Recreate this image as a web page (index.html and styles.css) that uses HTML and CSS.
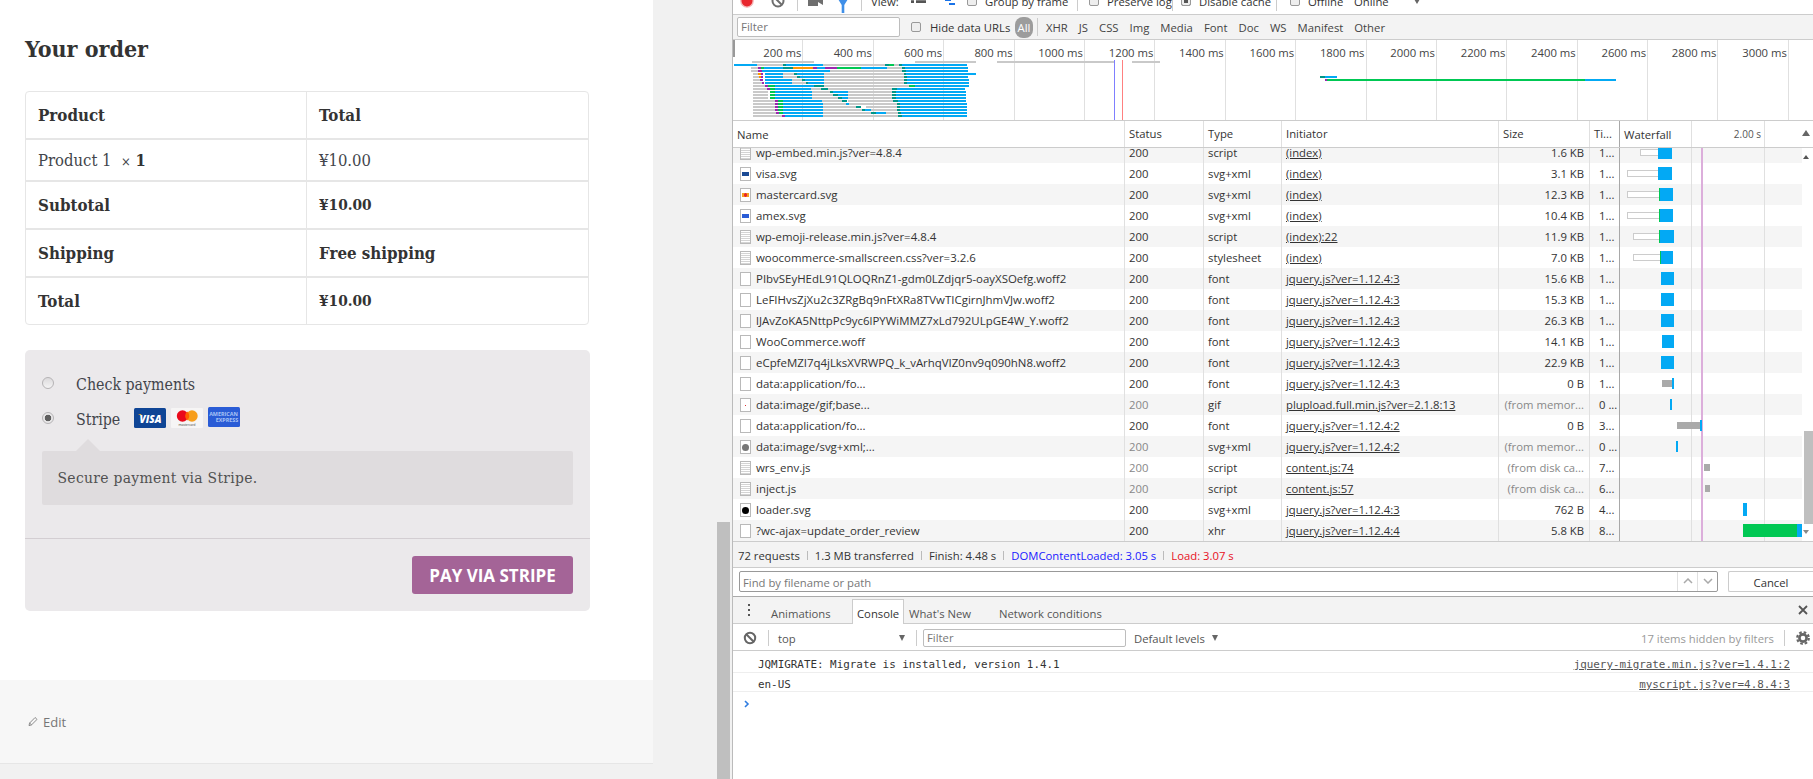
FILE: index.html
```html
<!DOCTYPE html>
<html lang="en">
<head>
  <meta charset="UTF-8" />
  <title>Checkout - Network panel</title>
  <link rel="stylesheet" href="styles.css">
</head>
<body>
<div class="screen">

  <!-- Shop page -->
  <div class="shop">
    <div class="article">
      <h3 class="order-title">Your order</h3>
      <table class="order-table">
        <tr class="row-head"><th class="col-a">Product</th><th>Total</th></tr>
        <tr class="row-item"><td class="col-a">Product 1 &nbsp;<span class="qty">×</span> <b>1</b></td><td>¥10.00</td></tr>
        <tr class="row-head"><th class="col-a">Subtotal</th><th class="amt">¥10.00</th></tr>
        <tr class="row-head"><th class="col-a">Shipping</th><th>Free shipping</th></tr>
        <tr class="row-head"><th class="col-a">Total</th><th class="amt">¥10.00</th></tr>
      </table>

      <div class="payment">
        <div class="methods">
          <label class="method"><input type="radio" name="pay" class="radio"><span class="method-name">Check payments</span></label>
          <label class="method method-stripe">
            <input type="radio" name="pay" class="radio" checked><span class="method-name">Stripe</span>
            <svg class="card" viewBox="0 0 32 20"><rect width="32" height="20" rx="1.5" fill="#0f4595"/><path d="M4 6h3l1 2z" fill="#e8a52c"/><text x="16.5" y="14.5" class="card-visa">VISA</text></svg>
            <svg class="card" viewBox="0 0 32 20"><rect width="32" height="20" rx="1" fill="#f6f5f5"/><circle cx="11.5" cy="8" r="5.7" fill="#ea0a1b"/><circle cx="21" cy="8" r="5.7" fill="#f79e1b"/><path d="M16.2 3.6a5.7 5.7 0 0 1 0 8.8a5.7 5.7 0 0 1 0-8.8z" fill="#ff5f00"/><text x="16" y="18.2" class="card-mc">mastercard</text></svg>
            <svg class="card card-amex" viewBox="0 0 32 20"><rect width="32" height="20" rx="1.5" fill="#2a5cd6"/><text x="15.5" y="8.5" class="card-ax">AMERICAN</text><text x="19" y="15" class="card-ax">EXPRESS</text></svg>
          </label>
          <div class="pay-desc">Secure payment via Stripe.</div>
        </div>
        <div class="pay-foot"><button class="pay-btn">Pay via Stripe</button></div>
      </div>
    </div>
    <div class="entry-foot">
      <svg class="pencil" viewBox="0 0 12 12"><path d="M8.5 1.2l2.3 2.3-6.6 6.6-3 .8.7-3z" fill="none" stroke="#777" stroke-width="1"/><path d="M2 7.8l2.3 2.3" stroke="#777" stroke-width="1"/></svg>
      <span>Edit</span>
    </div>
  </div>

  <div class="gutter"><div class="gutter-thumb"></div></div>

  <!-- DevTools -->
  <div class="devtools">
    <div class="net-toolbar">
      <div class="net-toolbar-inner">
        <svg class="tb-record" viewBox="0 0 16 16"><circle cx="8" cy="8" r="7" fill="#e8262d" stroke="#f3b6b6" stroke-width="1.5"/></svg>
        <svg class="tb-stop" viewBox="0 0 14 14"><circle cx="7" cy="7" r="5.5" fill="none" stroke="#6e6e6e" stroke-width="2"/><path d="M3 3l8 8" stroke="#6e6e6e" stroke-width="2"/></svg>
        <span class="tb-sep sep-a"></span>
        <svg class="tb-cam" viewBox="0 0 15 14"><path d="M0 2h10v10H0zM10 6l5-3v8l-5-3z" fill="#6e6e6e"/></svg>
        <svg class="tb-funnel" viewBox="0 0 10 14"><path d="M0 0h10L6.300 6v8H3.700V6z" fill="#3f8fe8"/></svg>
        <span class="tb-sep sep-b"></span>
        <span class="tb-view">View:</span>
        <svg class="tb-list" viewBox="0 0 15 14"><path d="M0 3h3v2H0zM5 3h10v2H5zM0 8h3v2H0zM5 8h10v2H5z" fill="#555"/></svg>
        <svg class="tb-wf" viewBox="0 0 14 14"><path d="M0 0h6v2H0zM4 4h6v2H4zM8 8h6v2H8z" fill="#1a73e8"/></svg>
        <span class="tb-check ck-a"></span><span class="tb-label lb-a">Group by frame</span>
        <span class="tb-sep sep-c"></span>
        <span class="tb-check ck-b"></span><span class="tb-label lb-b">Preserve log</span>
        <span class="tb-sep sep-d"></span>
        <span class="tb-check ck-c is-on"></span><span class="tb-label lb-b">Disable cache</span>
        <span class="tb-sep sep-e"></span>
        <span class="tb-check ck-d"></span><span class="tb-label lb-b">Offline</span>
        <span class="tb-label lb-c">Online</span>
        <span class="tb-caret"></span>
      </div>
    </div>

    <div class="net-filter">
      <div class="field field-filter">Filter</div>
      <span class="tb-check hide-check"></span><span class="hide-label">Hide data URLs</span>
      <span class="pill">All</span>
      <span class="filter-sep"></span>
      <span class="ftype">XHR</span><span class="ftype">JS</span><span class="ftype">CSS</span><span class="ftype">Img</span><span class="ftype">Media</span><span class="ftype">Font</span><span class="ftype">Doc</span><span class="ftype">WS</span><span class="ftype">Manifest</span><span class="ftype">Other</span>
    </div>

    <div class="overview">
      <div class="tick">200 ms</div><div class="tick">400 ms</div><div class="tick">600 ms</div><div class="tick">800 ms</div><div class="tick">1000 ms</div><div class="tick">1200 ms</div><div class="tick">1400 ms</div><div class="tick">1600 ms</div><div class="tick">1800 ms</div><div class="tick">2000 ms</div><div class="tick">2200 ms</div><div class="tick">2400 ms</div><div class="tick">2600 ms</div><div class="tick">2800 ms</div><div class="tick">3000 ms</div>
      <!-- coordinates here are in a 2.8x / 3x space -->
      <svg class="overview-bars" viewBox="11.2 120 3024 240" preserveAspectRatio="none" shape-rendering="crispEdges">
        <path class="g" d="M65 184h172v5H65zM522 184h170v5H522zM749 184h329v5H749zM1127 184h80v5h-80z"/>
        <path class="handle" d="M11 120h7v52h-7z"/>
        <path class="lb" d="M1079 180h3v180h-3z"/>
        <path class="lr" d="M1100 180h3v180h-3z"/>
        <path class="g" d="M78 192h72v6H78zM263 192h174v6H263zM462 192h14v6h-14zM62 201h18v6H62zM442 201h42v6h-42zM62 210h20v6H62zM283 210h201v6H283zM66 219h16v6H66zM150 219h32v6h-32zM266 219h224v6H266zM66 228h18v6H66zM152 228h38v6h-38zM266 228h224v6H266zM66 237h22v6H66zM175 237h29v6h-29zM266 237h224v6H266zM66 246h26v6H66zM175 246h41v6h-41zM266 246h224v6H266zM66 255h34v6H66zM266 255h238v6H266zM66 264h40v6H66zM230 264h28v6h-28zM276 264h179v6H276zM66 273h42v6H66zM232 273h50v6h-50zM332 273h124v6H332zM66 282h44v6H66zM232 282h60v6h-60zM332 282h124v6H332zM66 291h44v6H66zM232 291h72v6h-72zM334 291h122v6H334zM66 300h64v6H66zM260 300h56v6h-56zM334 300h124v6H334zM66 309h64v6H66zM262 309h66v6h-66zM336 309h134v6H336zM66 318h64v6H66zM262 318h94v6h-94zM384 318h86v6h-86zM66 327h64v6H66zM263 327h109v6H263zM398 327h72v6h-72zM66 336h66v6H66zM263 336h135v6H263zM440 336h34v6h-34zM66 345h82v6H66zM263 345h211v6H263z"/>
        <path class="b" d="M13 192h65v6H13zM160 192h103v6H160zM484 192h183v6H484zM98 201h52v6H98zM247 201h21v6h-21zM370 201h72v6h-72zM494 201h175v6H494zM92 210h191v6H92zM496 210h173v6H496zM100 219h50v6h-50zM190 219h76v6h-76zM496 219h196v6H496zM100 228h52v6h-52zM198 228h68v6h-68zM498 228h171v6H498zM100 237h75v6h-75zM212 237h54v6h-54zM498 237h173v6H498zM100 246h75v6h-75zM222 246h44v6h-44zM498 246h174v6H498zM128 255h110v6H128zM520 255h153v6H520zM128 264h102v6H128zM470 264h191v6H470zM128 273h104v6H128zM290 273h42v6h-42zM468 273h195v6H468zM130 282h102v6H130zM304 282h28v6h-28zM468 282h196v6H468zM130 291h102v6H130zM316 291h18v6h-18zM468 291h196v6H468zM150 300h110v6H150zM472 300h192v6H472zM150 309h112v6H150zM328 309h8v6h-8zM478 309h187v6H478zM150 318h112v6H150zM478 318h188v6H478zM150 327h113v6H150zM380 327h18v6h-18zM480 327h186v6H480zM152 336h111v6H152zM412 336h28v6h-28zM482 336h185v6H482zM158 345h105v6H158zM484 345h183v6H484zM1668 228h34v6h-34zM2397 237h87v6h-87z"/>
        <path class="t" d="M150 192h10v6h-10zM437 192h10v6h-10zM476 192h8v6h-8zM150 201h28v6h-28zM484 201h10v6h-10zM484 210h12v6h-12zM182 219h8v6h-8zM490 219h6v6h-6zM190 228h8v6h-8zM490 228h8v6h-8zM204 237h8v6h-8zM490 237h8v6h-8zM216 246h6v6h-6zM490 246h8v6h-8zM238 255h28v6h-28zM258 264h18v6h-18zM455 264h15v6h-15zM282 273h8v6h-8zM456 273h12v6h-12zM292 282h12v6h-12zM456 282h12v6h-12zM304 291h12v6h-12zM456 291h12v6h-12zM316 300h14v6h-14zM458 300h14v6h-14zM470 309h8v6h-8zM356 318h14v6h-14zM470 318h8v6h-8zM372 327h8v6h-8zM470 327h10v6h-10zM398 336h14v6h-14zM474 336h8v6h-8zM474 345h10v6h-10zM1656 228h12v6h-12z"/>
        <path class="p" d="M80 201h10v6H80zM235 201h12v6h-12zM268 201h34v6h-34zM82 210h10v6H82zM90 219h6v6h-6zM90 228h6v6h-6zM88 237h8v6h-8zM92 246h6v6h-6zM100 255h8v6h-8zM106 264h10v6h-10zM130 300h6v6h-6zM130 309h8v6h-8zM130 318h8v6h-8zM130 327h8v6h-8zM132 336h8v6h-8zM148 345h10v6h-10zM1669 237h6v6h-6z"/>
        <path class="o" d="M178 201h57v6h-57zM82 219h8v6h-8zM84 228h6v6h-6z"/>
        <path class="gr" d="M447 192h15v6h-15zM90 201h8v6h-8zM302 201h68v6h-68zM108 255h20v6h-20zM504 255h16v6h-16zM116 264h12v6h-12zM116 273h12v6h-12zM116 282h14v6h-14zM116 291h14v6h-14zM136 300h14v6h-14zM138 309h12v6h-12zM138 318h12v6h-12zM138 327h12v6h-12zM140 336h12v6h-12zM1675 237h722v6h-722z"/>
      </svg>
    </div>

    <div class="net-head net-grid">
      <div class="cell cell-name">Name</div>
      <div class="cell">Status</div>
      <div class="cell">Type</div>
      <div class="cell">Initiator</div>
      <div class="cell">Size</div>
      <div class="cell">Ti...</div>
      <div class="cell cell-wf head-wf"><span>Waterfall</span><span class="head-time">2.00 s</span></div>
      <span class="sort-arrow"></span>
      <i class="wf-line line-1"></i><i class="wf-line line-2"></i>
    </div>

    <div class="net-body">
      <div class="net-list">
        <div class="net-row net-grid row-first">
          <div class="cell cell-name"><i class="ficon f-script"></i>wp-embed.min.js?ver=4.8.4</div><div class="cell">200</div><div class="cell">script</div><div class="cell"><u>(index)</u></div><div class="cell cell-size">1.6 KB</div><div class="cell cell-time">1...</div>
          <div class="cell cell-wf"><i class="wait" style="margin-left:19px;width:18px"></i><i class="recv" style="width:14px"></i></div>
        </div>
        <div class="net-row net-grid">
          <div class="cell cell-name"><i class="ficon f-visa"></i>visa.svg</div><div class="cell">200</div><div class="cell">svg+xml</div><div class="cell"><u>(index)</u></div><div class="cell cell-size">3.1 KB</div><div class="cell cell-time">1...</div>
          <div class="cell cell-wf"><i class="wait" style="margin-left:6px;width:31px"></i><i class="recv" style="width:14px"></i></div>
        </div>
        <div class="net-row net-grid">
          <div class="cell cell-name"><i class="ficon f-mc"></i>mastercard.svg</div><div class="cell">200</div><div class="cell">svg+xml</div><div class="cell"><u>(index)</u></div><div class="cell cell-size">12.3 KB</div><div class="cell cell-time">1...</div>
          <div class="cell cell-wf"><i class="wait" style="margin-left:6px;width:32px"></i><i class="ttfb" style="width:1px"></i><i class="recv" style="width:13px"></i></div>
        </div>
        <div class="net-row net-grid">
          <div class="cell cell-name"><i class="ficon f-amex"></i>amex.svg</div><div class="cell">200</div><div class="cell">svg+xml</div><div class="cell"><u>(index)</u></div><div class="cell cell-size">10.4 KB</div><div class="cell cell-time">1...</div>
          <div class="cell cell-wf"><i class="wait" style="margin-left:6px;width:32px"></i><i class="ttfb" style="width:1px"></i><i class="recv" style="width:13px"></i></div>
        </div>
        <div class="net-row net-grid">
          <div class="cell cell-name"><i class="ficon f-script"></i>wp-emoji-release.min.js?ver=4.8.4</div><div class="cell">200</div><div class="cell">script</div><div class="cell"><u>(index):22</u></div><div class="cell cell-size">11.9 KB</div><div class="cell cell-time">1...</div>
          <div class="cell cell-wf"><i class="wait" style="margin-left:12px;width:26px"></i><i class="ttfb" style="width:1px"></i><i class="recv" style="width:14px"></i></div>
        </div>
        <div class="net-row net-grid">
          <div class="cell cell-name"><i class="ficon f-script"></i>woocommerce-smallscreen.css?ver=3.2.6</div><div class="cell">200</div><div class="cell">stylesheet</div><div class="cell"><u>(index)</u></div><div class="cell cell-size">7.0 KB</div><div class="cell cell-time">1...</div>
          <div class="cell cell-wf"><i class="wait" style="margin-left:12px;width:27px"></i><i class="ttfb" style="width:1px"></i><i class="recv" style="width:12px"></i></div>
        </div>
        <div class="net-row net-grid">
          <div class="cell cell-name"><i class="ficon"></i>PIbvSEyHEdL91QLOQRnZ1-gdm0LZdjqr5-oayXSOefg.woff2</div><div class="cell">200</div><div class="cell">font</div><div class="cell"><u>jquery.js?ver=1.12.4:3</u></div><div class="cell cell-size">15.6 KB</div><div class="cell cell-time">1...</div>
          <div class="cell cell-wf"><i class="recv" style="margin-left:40px;width:13px"></i></div>
        </div>
        <div class="net-row net-grid">
          <div class="cell cell-name"><i class="ficon"></i>LeFIHvsZjXu2c3ZRgBq9nFtXRa8TVwTICgirnJhmVJw.woff2</div><div class="cell">200</div><div class="cell">font</div><div class="cell"><u>jquery.js?ver=1.12.4:3</u></div><div class="cell cell-size">15.3 KB</div><div class="cell cell-time">1...</div>
          <div class="cell cell-wf"><i class="recv" style="margin-left:40px;width:13px"></i></div>
        </div>
        <div class="net-row net-grid">
          <div class="cell cell-name"><i class="ficon"></i>lJAvZoKA5NttpPc9yc6lPYWiMMZ7xLd792ULpGE4W_Y.woff2</div><div class="cell">200</div><div class="cell">font</div><div class="cell"><u>jquery.js?ver=1.12.4:3</u></div><div class="cell cell-size">26.3 KB</div><div class="cell cell-time">1...</div>
          <div class="cell cell-wf"><i class="recv" style="margin-left:40px;width:13px"></i></div>
        </div>
        <div class="net-row net-grid">
          <div class="cell cell-name"><i class="ficon"></i>WooCommerce.woff</div><div class="cell">200</div><div class="cell">font</div><div class="cell"><u>jquery.js?ver=1.12.4:3</u></div><div class="cell cell-size">14.1 KB</div><div class="cell cell-time">1...</div>
          <div class="cell cell-wf"><i class="recv" style="margin-left:41px;width:12px"></i></div>
        </div>
        <div class="net-row net-grid">
          <div class="cell cell-name"><i class="ficon"></i>eCpfeMZI7q4jLksXVRWPQ_k_vArhqVIZ0nv9q090hN8.woff2</div><div class="cell">200</div><div class="cell">font</div><div class="cell"><u>jquery.js?ver=1.12.4:3</u></div><div class="cell cell-size">22.9 KB</div><div class="cell cell-time">1...</div>
          <div class="cell cell-wf"><i class="recv" style="margin-left:40px;width:13px"></i></div>
        </div>
        <div class="net-row net-grid">
          <div class="cell cell-name"><i class="ficon"></i>data:application/fo...</div><div class="cell">200</div><div class="cell">font</div><div class="cell"><u>jquery.js?ver=1.12.4:3</u></div><div class="cell cell-size">0 B</div><div class="cell cell-time">1...</div>
          <div class="cell cell-wf"><i class="stall" style="margin-left:41px;width:10px"></i><i class="recv thin" style="width:2px"></i></div>
        </div>
        <div class="net-row net-grid">
          <div class="cell cell-name"><i class="ficon f-dot"></i>data:image/gif;base...</div><div class="cell cell-dim">200</div><div class="cell">gif</div><div class="cell"><u>plupload.full.min.js?ver=2.1.8:13</u></div><div class="cell cell-size cell-dim">(from memor...</div><div class="cell cell-time">0 ...</div>
          <div class="cell cell-wf"><i class="recv thin" style="margin-left:49px;width:2px"></i></div>
        </div>
        <div class="net-row net-grid">
          <div class="cell cell-name"><i class="ficon"></i>data:application/fo...</div><div class="cell">200</div><div class="cell">font</div><div class="cell"><u>jquery.js?ver=1.12.4:2</u></div><div class="cell cell-size">0 B</div><div class="cell cell-time">3...</div>
          <div class="cell cell-wf"><i class="stall" style="margin-left:56px;width:23px"></i><i class="recv thin" style="width:2px"></i></div>
        </div>
        <div class="net-row net-grid">
          <div class="cell cell-name"><i class="ficon f-grey"></i>data:image/svg+xml;...</div><div class="cell cell-dim">200</div><div class="cell">svg+xml</div><div class="cell"><u>jquery.js?ver=1.12.4:2</u></div><div class="cell cell-size cell-dim">(from memor...</div><div class="cell cell-time">0 ...</div>
          <div class="cell cell-wf"><i class="recv thin" style="margin-left:55px;width:2px"></i></div>
        </div>
        <div class="net-row net-grid">
          <div class="cell cell-name"><i class="ficon f-script"></i>wrs_env.js</div><div class="cell cell-dim">200</div><div class="cell">script</div><div class="cell"><u>content.js:74</u></div><div class="cell cell-size cell-dim">(from disk ca...</div><div class="cell cell-time">7...</div>
          <div class="cell cell-wf"><i class="stall" style="margin-left:83px;width:6px"></i></div>
        </div>
        <div class="net-row net-grid">
          <div class="cell cell-name"><i class="ficon f-script"></i>inject.js</div><div class="cell cell-dim">200</div><div class="cell">script</div><div class="cell"><u>content.js:57</u></div><div class="cell cell-size cell-dim">(from disk ca...</div><div class="cell cell-time">6...</div>
          <div class="cell cell-wf"><i class="stall" style="margin-left:84px;width:5px"></i></div>
        </div>
        <div class="net-row net-grid">
          <div class="cell cell-name"><i class="ficon f-loader"></i>loader.svg</div><div class="cell">200</div><div class="cell">svg+xml</div><div class="cell"><u>jquery.js?ver=1.12.4:3</u></div><div class="cell cell-size">762 B</div><div class="cell cell-time">4...</div>
          <div class="cell cell-wf"><i class="recv" style="margin-left:122px;width:4px"></i></div>
        </div>
        <div class="net-row net-grid">
          <div class="cell cell-name"><i class="ficon"></i>?wc-ajax=update_order_review</div><div class="cell">200</div><div class="cell">xhr</div><div class="cell"><u>jquery.js?ver=1.12.4:4</u></div><div class="cell cell-size">5.8 KB</div><div class="cell cell-time">8...</div>
          <div class="cell cell-wf"><i class="ttfb" style="margin-left:122px;width:54px"></i><i class="recv" style="width:5px"></i></div>
        </div>
        <i class="wf-line line-1"></i><i class="wf-line line-2"></i><i class="wf-load"></i>
      </div>
      <div class="net-scroll">
        <span class="scroll-up"></span>
        <div class="net-scroll-thumb"></div>
        <span class="scroll-down"></span>
      </div>
    </div>

    <div class="net-summary">
      <span>72 requests</span><i class="sum-sep"></i>
      <span>1.3 MB transferred</span><i class="sum-sep"></i>
      <span>Finish: 4.48 s</span><i class="sum-sep"></i>
      <span class="sum-dom">DOMContentLoaded: 3.05 s</span><i class="sum-sep"></i>
      <span class="sum-load">Load: 3.07 s</span>
    </div>

    <div class="net-find">
      <div class="field find-input">
        <span class="find-text">Find by filename or path</span>
        <span class="find-btn"><svg viewBox="0 0 10 6"><path d="M1 5l4-4 4 4" fill="none" stroke="#aaa" stroke-width="1.500"/></svg></span>
        <span class="find-btn"><svg viewBox="0 0 10 6"><path d="M1 1l4 4 4-4" fill="none" stroke="#aaa" stroke-width="1.500"/></svg></span>
      </div>
      <div class="cancel-btn">Cancel</div>
    </div>

    <div class="drawer-tabs">
      <span class="drawer-dots"><i></i><i></i><i></i></span>
      <span class="tab tab-anim">Animations</span>
      <span class="tab tab-on">Console</span>
      <span class="tab tab-new">What's New</span>
      <span class="tab tab-net">Network conditions</span>
      <svg class="drawer-close" viewBox="0 0 10 10"><path d="M1 1l8 8M9 1l-8 8" stroke="#555" stroke-width="1.800"/></svg>
    </div>

    <div class="console-bar">
      <svg class="con-clear" viewBox="0 0 14 14"><circle cx="7" cy="7" r="5.200" fill="none" stroke="#666" stroke-width="2"/><path d="M3.300 3.300l7.400 7.400" stroke="#666" stroke-width="2"/></svg>
      <span class="con-sep"></span>
      <span class="con-top">top</span>
      <span class="con-caret"></span>
      <span class="con-sep con-sep-b"></span>
      <div class="field con-filter">Filter</div>
      <span class="con-levels">Default levels</span>
      <span class="con-caret"></span>
      <span class="con-hidden">17 items hidden by filters</span>
      <span class="con-sep con-sep-c"></span>
      <svg class="con-gear" viewBox="0 0 14 14"><circle cx="7" cy="7" r="3.600" fill="none" stroke="#666" stroke-width="2.600"/><circle cx="7" cy="7" r="5.800" fill="none" stroke="#666" stroke-width="2.200" stroke-dasharray="2.600 1.950"/></svg>
    </div>

    <div class="console-log">
      <div class="log-row"><span>JQMIGRATE: Migrate is installed, version 1.4.1</span><u class="log-src">jquery-migrate.min.js?ver=1.4.1:2</u></div>
      <div class="log-row log-row-b"><span>en-US</span><u class="log-src">myscript.js?ver=4.8.4:3</u></div>
      <svg class="log-prompt" viewBox="0 0 6 8"><path d="M1 1l3 3-3 3" fill="none" stroke="#2f7de1" stroke-width="1.600"/></svg>
    </div>
  </div>
</div>
</body>
</html>
```

FILE: styles.css
```css
* { box-sizing: border-box; margin: 0; padding: 0; }
html, body {
  height: 100%;
  overflow: hidden;
  background: #f1f1f1;
}
i { font-style: normal; display: block; }

.screen {
  display: flex;
  width: 1813px;
  height: 779px;
  overflow: hidden;
}

/* ---- shop page ---- */
.shop {
  width: 653px;
  flex: none;
  font-family: "DejaVu Serif", "Liberation Serif", serif;
  font-stretch: condensed;
  color: #43454b;
}
.article {
  height: 680px;
  background: #fff;
  padding: 32px 63px 0 25px;
}
.order-title {
  font-size: 23px;
  line-height: 34px;
  height: 59px;
  font-weight: 700;
  color: #333;
}
.order-table {
  width: 564px;
  border-collapse: separate;
  border-spacing: 0;
  border: 1px solid #e6e6e6;
  border-radius: 4px;
  font-size: 16.500px;
  text-align: left;
}
.order-table th, .order-table td {
  padding: 0 12px;
  border-left: 1px solid #e6e6e6;
  border-top: 2px solid #e6e6e6;
  height: 48px;
  font-weight: 400;
}
.order-table th { font-size: 16.800px; font-weight: 700; color: #333; }
.order-table th.amt { font-size: 15.300px; }
.order-table .col-a { width: 280px; border-left: none; }
.order-table tr:first-child th { border-top: none; height: 46px; }
.order-table .row-item td { height: 42px; }
.order-table b { color: #333; }
.qty { font-size: 13px; }

.payment {
  margin-top: 25px;
  height: 261px;
  background: #ebe9eb;
  border-radius: 5px;
}
.methods {
  padding: 21px 17px 33px;
  height: 189px;
  border-bottom: 1px solid #d3ced2;
}
.method {
  display: flex;
  align-items: center;
  height: 24px;
  font-size: 15.800px;
  color: #43454b;
}
.method-name { padding-top: 2px; }
.method-stripe { margin-top: 11px; }
.method-stripe .method-name { width: 48px; flex: none; }
.radio {
  appearance: none;
  width: 12px;
  height: 12px;
  margin-right: 22px;
  border-radius: 50%;
  border: 1px solid #b5b3b5;
  background: linear-gradient(#dcdadc, #f4f3f4);
  flex: none;
}
.radio:checked {
  background: radial-gradient(circle, #5f5f5f 0 3px, #e9e8e9 3.600px);
}
.card {
  width: 32px;
  height: 20px;
  margin-left: 5px;
  flex: none;
}
.method-stripe .method-name + .card { margin-left: 10px; }
.card-amex { transform: translateY(-1px); }
.card-visa {
  font-family: "Open Sans", sans-serif;
  font-size: 10px;
  font-style: italic;
  font-weight: 800;
  fill: #fff;
  text-anchor: middle;
  font-stretch: normal;
}
.card-mc {
  font-family: "Open Sans", sans-serif;
  font-size: 3.200px;
  fill: #444;
  text-anchor: middle;
  font-stretch: normal;
}
.card-ax {
  font-family: "Open Sans", sans-serif;
  font-size: 5.400px;
  font-weight: 700;
  fill: #a9c3f5;
  text-anchor: middle;
  font-stretch: normal;
}
.pay-desc {
  position: relative;
  margin-top: 21px;
  height: 54px;
  padding: 0 15.500px;
  line-height: 54px;
  font-size: 15.500px;
  letter-spacing: .29px;
  color: #515151;
  background: #dfdcde;
  border-radius: 2px;
}
.pay-desc::before {
  content: "";
  position: absolute;
  left: 34px;
  top: -12px;
  border-left: 12px solid transparent;
  border-right: 12px solid transparent;
  border-bottom: 12px solid #dfdcde;
}
.pay-foot {
  display: flex;
  justify-content: flex-end;
  padding: 17px 17px;
}
.pay-btn {
  width: 161px;
  height: 38px;
  border: none;
  border-radius: 3px;
  background: #a46497;
  color: #fff;
  font-family: "Open Sans", sans-serif;
  font-stretch: normal;
  font-size: 17px;
  font-weight: 700;
  text-transform: uppercase;
}
.entry-foot {
  height: 84px;
  background: #f7f7f7;
  border-bottom: 1px solid #e6e6e6;
  display: flex;
  align-items: center;
  padding: 0 0 0 28px;
  gap: 5px;
  font-family: "Open Sans", sans-serif;
  font-stretch: normal;
  font-size: 13px;
  color: #767676;
}
.pencil { width: 10px; height: 11px; }

/* ---- page scrollbar ---- */
.gutter {
  width: 80px;
  flex: none;
  display: flex;
  justify-content: flex-end;
  padding: 522px 2px 0 0;
  border-right: 1px solid #bbb;
  background: #f1f1f1;
}
.gutter-thumb { width: 13px; background: #bfbfbf; }

/* ---- devtools ---- */
.devtools {
  flex: 1;
  min-width: 0;
  background: #fff;
  font-family: "Open Sans", sans-serif;
  font-size: 11.300px;
  color: #333;
  position: relative;
}
.field {
  background: #fff;
  border: 1px solid #bdbdbd;
  border-radius: 2px;
  color: #777;
}
.tb-sep { width: 1px; height: 20px; background: #ccc; flex: none; }

.net-toolbar {
  height: 15px;
  overflow: hidden;
  border-bottom: 1px solid #ccc;
}
.net-toolbar-inner {
  display: flex;
  align-items: center;
  height: 26px;
  margin-top: -12px;
  padding-left: 7px;
  white-space: nowrap;
}
.tb-record { width: 14px; height: 14px; flex: none; }
.tb-stop { width: 14px; height: 14px; margin-left: 17px; flex: none; }
.sep-a { margin-left: 12px; }
.tb-cam { width: 15px; height: 14px; margin-left: 10px; flex: none; }
.tb-funnel { width: 10px; height: 14px; margin-left: 15px; flex: none; transform: translateY(5px); }
.sep-b { margin-left: 13px; }
.tb-view { margin-left: 9px; width: 40px; }
.tb-list { width: 15px; height: 14px; flex: none; transform: translateY(-2px) scaleY(1.300); }
.tb-wf { width: 14px; height: 14px; margin-left: 15px; flex: none; transform: translateY(1px); }
.tb-check {
  width: 10px;
  height: 10px;
  border: 1px solid #999;
  border-radius: 2px;
  background: #eee;
  flex: none;
}
.tb-check.is-on { background: #555; box-shadow: inset 0 0 0 2px #eee; }
.ck-a { margin-left: 12px; }
.tb-label { margin-left: 8px; }
.lb-a { width: 83px; }
.lb-b { width: 71px; }
.sep-c { margin-left: 9px; }
.ck-b { margin-left: 11px; }
.sep-d { margin-left: -6px; }
.ck-c { margin-left: 8px; }
.sep-e { margin-left: 6px; }
.ck-d { margin-left: 13px; }
.lb-c { margin-left: -25px; }
.tb-caret {
  margin-left: 25px;
  border-left: 3px solid transparent;
  border-right: 3px solid transparent;
  border-top: 5px solid #666;
}

.net-filter {
  height: 25px;
  background: #f3f3f3;
  border-bottom: 1px solid #ccc;
  display: flex;
  align-items: center;
  padding: 0 0 0 4px;
  white-space: nowrap;
}
.field-filter {
  width: 163px;
  height: 20px;
  line-height: 18px;
  padding-left: 3px;
  font-size: 11.500px;
}
.hide-check { margin-left: 11px; }
.hide-label { margin-left: 9px; width: 85px; }
.pill {
  width: 18px;
  height: 21px;
  line-height: 21px;
  text-align: center;
  border-radius: 8px;
  background: #9c9c9c;
  color: #fff;
}
.filter-sep { width: 1px; height: 18px; background: #ccc; margin: 0 8px 0 4px; }
.ftype { margin-right: 11px; color: #444; }

.overview {
  position: relative;
  height: 81px;
  display: flex;
  border-bottom: 1px solid #ccc;
  overflow: hidden;
}
.tick {
  width: 70.400px;
  flex: none;
  padding: 5px 1px 0 0;
  text-align: right;
  border-right: 1px solid #e0e0e0;
  white-space: nowrap;
  color: #444;
}
.overview-bars {
  position: absolute;
  left: 0;
  top: 0;
  width: 1080px;
  height: 80px;
}
.overview-bars .g { fill: #c9c9c9; }
.overview-bars .b { fill: #03a9f4; }
.overview-bars .t { fill: #009688; }
.overview-bars .p { fill: #9c27b0; }
.overview-bars .o { fill: #ff9800; }
.overview-bars .gr { fill: #00c853; }
.overview-bars .handle { fill: #999; }
.overview-bars .lb { fill: #7f7fff; }
.overview-bars .lr { fill: #ff8080; }

.net-grid {
  display: grid;
  grid-template-columns: 391px 79px 78px 217px 91px 30px 1fr;
}
.cell {
  border-left: 1px solid #e0e0e0;
  padding-left: 4px;
  white-space: nowrap;
  overflow: hidden;
}
.cell-name {
  border-left: none;
  padding-left: 7px;
  display: flex;
  align-items: center;
  font-size: 11.450px;
}
.net-head {
  position: relative;
  height: 27px;
  line-height: 25px;
  border-bottom: 1px solid #ccc;
}
.net-head .cell-name { padding-left: 4px; font-size: 11.300px; }
.head-wf {
  display: flex;
  justify-content: space-between;
  padding-right: 52px;
}
.head-time { font-size: 10px; color: #555; }
.sort-arrow {
  position: absolute;
  right: 3px;
  top: 9px;
  border-left: 4px solid transparent;
  border-right: 4px solid transparent;
  border-bottom: 6px solid #666;
}
.wf-line {
  position: absolute;
  top: 0;
  bottom: 0;
  width: 1px;
  background: #e0e0e0;
}
.line-1 { left: 958px; }
.line-2 { left: 1031px; }
.wf-load {
  position: absolute;
  top: 0;
  bottom: 0;
  left: 968px;
  width: 2px;
  background: #dcaedb;
}

.net-body {
  display: flex;
  height: 393px;
}
.net-list {
  position: relative;
  width: 1069px;
  flex: none;
  overflow: hidden;
}
.net-row {
  height: 21px;
  line-height: 22px;
}
.net-row .cell-name { padding-top: 1px; }
.net-row:nth-child(odd) { background: #f5f5f5; }
.row-first { margin-top: -6px; }
.cell-size {
  text-align: right;
  padding: 0 5px 0 0;
}
.cell-dim { color: #888; }
.cell-time { padding-left: 9px; }
.cell-wf {
  display: flex;
  align-items: center;
  padding-left: 1px;
  border-left: 1px solid #a8a8a8;
  position: relative;
  z-index: 1;
}
.net-head .head-wf { padding-left: 4px; border-left: 1px solid #a8a8a8; }
.wait { height: 7px; background: #fff; border: 1px solid #ccc; border-right: none; flex: none; }
.recv { height: 13px; background: #03a9f4; flex: none; }
.recv.thin { height: 11px; }
.ttfb { height: 13px; background: #00c853; flex: none; }
.stall { height: 7px; background: #aaa; flex: none; }

.ficon {
  position: relative;
  width: 11px;
  height: 14px;
  margin-right: 5px;
  flex: none;
  background: #fff;
  border: 1px solid #b9b9b9;
}
.f-script {
  background: repeating-linear-gradient(#fff 0 1px, #d4d4d4 1px 2px);
}
.f-visa::after, .f-mc::after, .f-amex::after, .f-dot::after, .f-grey::after, .f-loader::after {
  content: "";
  position: absolute;
  left: 1px;
  top: 4px;
  width: 7px;
  height: 4px;
}
.f-visa::after { background: #1a4a94; }
.f-mc::after { background: radial-gradient(circle, #e8262d 0 1.500px, #f7a020 2px); }
.f-amex::after { background: #2a5cd6; }
.f-dot::after { background: #d33; width: 1px; height: 1px; left: 4px; top: 6px; }
.f-grey::after { background: #777; border-radius: 50%; width: 7px; height: 7px; top: 3px; }
.f-loader::after { background: #000; border-radius: 50%; width: 7px; height: 7px; top: 3px; }

.net-scroll {
  position: relative;
  flex: 1;
  background: #fff;
}
.scroll-up {
  position: absolute;
  top: 7px;
  left: 1px;
  border-left: 3.500px solid transparent;
  border-right: 3.500px solid transparent;
  border-bottom: 4px solid #555;
}
.net-scroll-thumb {
  position: absolute;
  left: 2px;
  right: 0;
  top: 283px;
  height: 93px;
  background: #bfbfbf;
}
.scroll-down {
  position: absolute;
  top: 382px;
  left: 1px;
  border-left: 3.500px solid transparent;
  border-right: 3.500px solid transparent;
  border-top: 4px solid #888;
}

.net-summary {
  height: 27px;
  display: flex;
  align-items: center;
  gap: 7px;
  padding: 2px 0 0 5px;
  background: #f3f3f3;
  border-top: 1px solid #ccc;
  border-bottom: 1px solid #ccc;
  white-space: nowrap;
}
.sum-sep { width: 1px; height: 9px; background: #bbb; }
.sum-dom { color: #1a1aff; }
.sum-load { color: #e81123; }

.net-find {
  height: 29px;
  display: flex;
  align-items: center;
  padding: 0 0 2px 6px;
  border-bottom: 1px solid #aaa;
  background: #fff;
}
.find-input {
  display: flex;
  width: 979px;
  height: 21px;
  line-height: 21px;
  border-color: #999;
  padding-left: 3px;
}
.find-text { flex: 1; }
.find-btn {
  width: 20px;
  display: flex;
  align-items: center;
  justify-content: center;
  border-left: 1px solid #e0e0e0;
}
.find-btn svg { width: 10px; height: 6px; }
.cancel-btn {
  margin-left: 10px;
  flex: 1;
  height: 21px;
  line-height: 21px;
  text-align: center;
  color: #333;
  border: 1px solid #ccc;
  border-right: none;
  border-radius: 2px 0 0 2px;
}

.drawer-tabs {
  position: relative;
  height: 27px;
  display: flex;
  align-items: flex-end;
  background: #f3f3f3;
  border-bottom: 1px solid #ccc;
  white-space: nowrap;
}
.drawer-dots {
  display: flex;
  flex-direction: column;
  gap: 3px;
  align-self: center;
  margin-left: 15px;
}
.drawer-dots i { width: 2px; height: 2px; background: #555; }
.tab { line-height: 18px; color: #555; }
.tab-anim { margin-left: 21px; width: 81px; }
.tab-on {
  width: 52px;
  height: 25px;
  margin-bottom: -1px;
  padding: 5px 0 0 4px;
  background: #fff;
  color: #333;
  border: 1px solid #ccc;
  border-bottom: none;
}
.tab-new { margin-left: 5px; width: 90px; }
.drawer-close {
  position: absolute;
  right: 5px;
  top: 8px;
  width: 10px;
  height: 10px;
}

.console-bar {
  height: 27px;
  display: flex;
  align-items: center;
  padding-top: 2px;
  border-bottom: 1px solid #ccc;
  white-space: nowrap;
  color: #555;
}
.con-clear { width: 14px; height: 14px; margin-left: 10px; flex: none; }
.con-sep { width: 1px; height: 16px; background: #ccc; margin-left: 11px; flex: none; }
.con-top { margin-left: 9px; width: 121px; }
.con-caret {
  border-left: 3.500px solid transparent;
  border-right: 3.500px solid transparent;
  border-top: 6px solid #666;
  flex: none;
}
.con-sep-b { margin-left: 11px; }
.con-filter {
  margin-left: 6px;
  width: 203px;
  height: 18px;
  line-height: 16px;
  padding-left: 3px;
}
.con-levels { margin-left: 8px; width: 78px; }
.con-hidden { margin-left: auto; color: #999; }
.con-sep-c { margin-left: 10px; }
.con-gear { width: 14px; height: 14px; margin: 0 3px 0 11px; flex: none; }

.console-log {
  position: relative;
  font-family: "DejaVu Sans Mono", "Liberation Mono", monospace;
  font-size: 10.900px;
  color: #333;
}
.log-row {
  display: flex;
  justify-content: space-between;
  height: 22px;
  line-height: 20px;
  padding: 4px 23px 0 25px;
  border-bottom: 1px solid #eee;
}
.log-row-b { height: 19px; line-height: 17px; padding-top: 3px; }
.log-src { color: #555; }
.log-prompt {
  margin: 8px 0 0 11px;
  width: 6px;
  height: 8px;
  display: block;
}
```
